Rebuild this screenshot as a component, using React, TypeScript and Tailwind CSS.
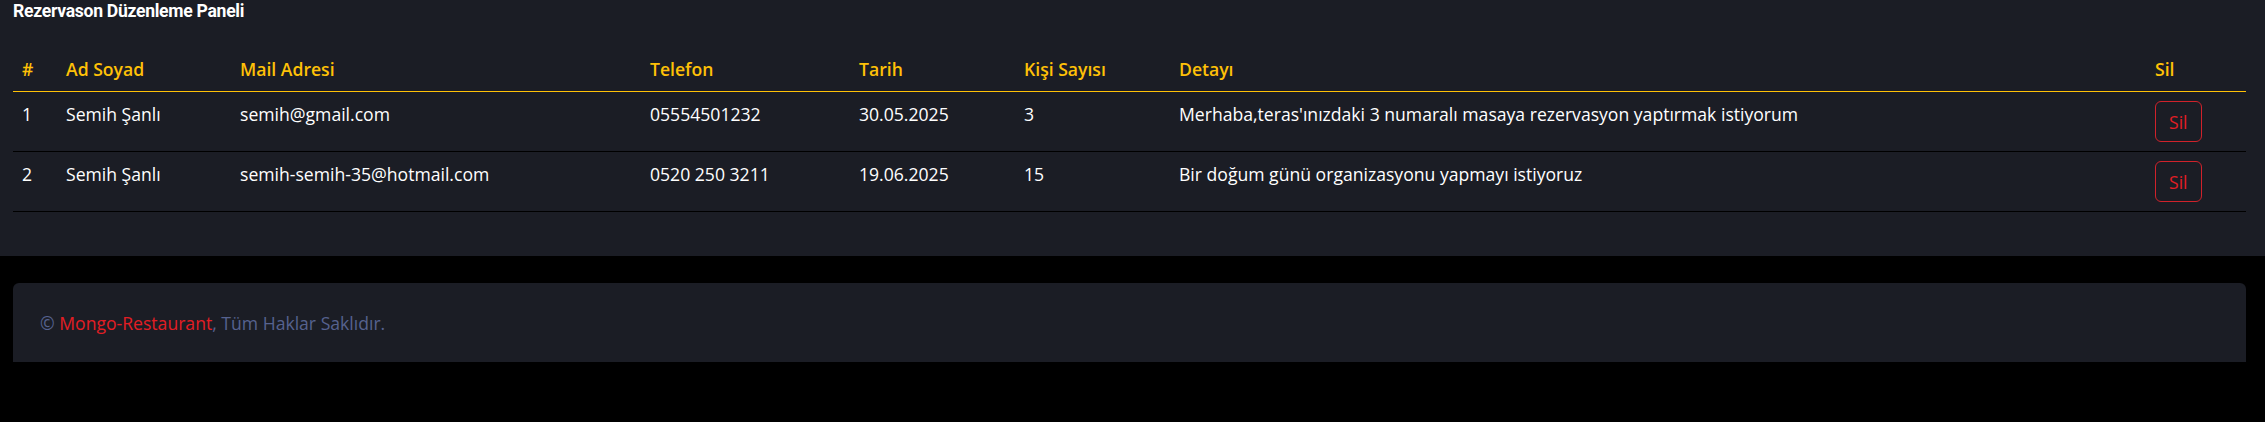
const rows = [
  {
    id: 1,
    name: 'Semih Şanlı',
    mail: 'semih@gmail.com',
    phone: '05554501232',
    date: '30.05.2025',
    count: '3',
    detail: "Merhaba,teras'ınızdaki 3 numaralı masaya rezervasyon yaptırmak istiyorum",
  },
  {
    id: 2,
    name: 'Semih Şanlı',
    mail: 'semih-semih-35@hotmail.com',
    phone: '0520 250 3211',
    date: '19.06.2025',
    count: '15',
    detail: 'Bir doğum günü organizasyonu yapmayı istiyoruz',
  },
];

const cols = [
  { label: '#', w: 'w-[44px]' },
  { label: 'Ad Soyad', w: 'w-[174px]' },
  { label: 'Mail Adresi', w: 'w-[410px]' },
  { label: 'Telefon', w: 'w-[209px]' },
  { label: 'Tarih', w: 'w-[165px]' },
  { label: 'Kişi Sayısı', w: 'w-[155px]' },
  { label: 'Detayı', w: 'w-[976px]' },
  { label: 'Sil', w: 'w-[100px]' },
];

function ReservationTable() {
  return (
    <table className="w-full table-fixed border-collapse text-left">
      <thead>
        <tr className="border-b border-[#ffc107]">
          {cols.map((c) => (
            <th
              key={c.label}
              className={`${c.w} px-[9px] py-[9px] text-[17.6px] leading-[26px] font-semibold text-[#ffc107]`}
            >
              {c.label}
            </th>
          ))}
        </tr>
      </thead>
      <tbody>
        {rows.map((r) => (
          <tr key={r.id} className="border-b border-black align-top text-[17.6px] leading-[26px] text-white">
            <td className="px-[9px] py-[9px]">{r.id}</td>
            <td className="px-[9px] py-[9px]">{r.name}</td>
            <td className="px-[9px] py-[9px]">{r.mail}</td>
            <td className="px-[9px] py-[9px]">{r.phone}</td>
            <td className="px-[9px] py-[9px]">{r.date}</td>
            <td className="px-[9px] py-[9px]">{r.count}</td>
            <td className="px-[9px] py-[9px]">{r.detail}</td>
            <td className="px-[9px] py-[9px]">
              <button className="h-[41px] rounded-[6px] border border-[#d0222b] px-[13px] text-[17.6px] leading-[26px] text-[#e31d24]">
                Sil
              </button>
            </td>
          </tr>
        ))}
      </tbody>
    </table>
  );
}

export default function App() {
  return (
    <div className="min-h-[422px] bg-black font-['Open_Sans',sans-serif]">
      <div className="h-[256px] bg-[#1b1d25] pl-[13px] pr-[19px]">
        <h6 className="pt-[1px] font-['Roboto',sans-serif] text-[17.6px] leading-[21px] font-bold tracking-[-0.3px] text-white">
          Rezervason Düzenleme Paneli
        </h6>
        <div className="mt-[25px]">
          <ReservationTable />
        </div>
      </div>
      <div className="pt-[27px] pl-[13px] pr-[19px]">
        <footer className="flex h-[79px] items-center rounded-t-[6px] bg-[#1b1d25] px-[27px]">
          <p className="text-[17.6px] leading-[26px] text-[#56628f]">
            © <span className="text-[#e31d24]">Mongo-Restaurant</span>, Tüm Haklar Saklıdır.
          </p>
        </footer>
      </div>
    </div>
  );
}
